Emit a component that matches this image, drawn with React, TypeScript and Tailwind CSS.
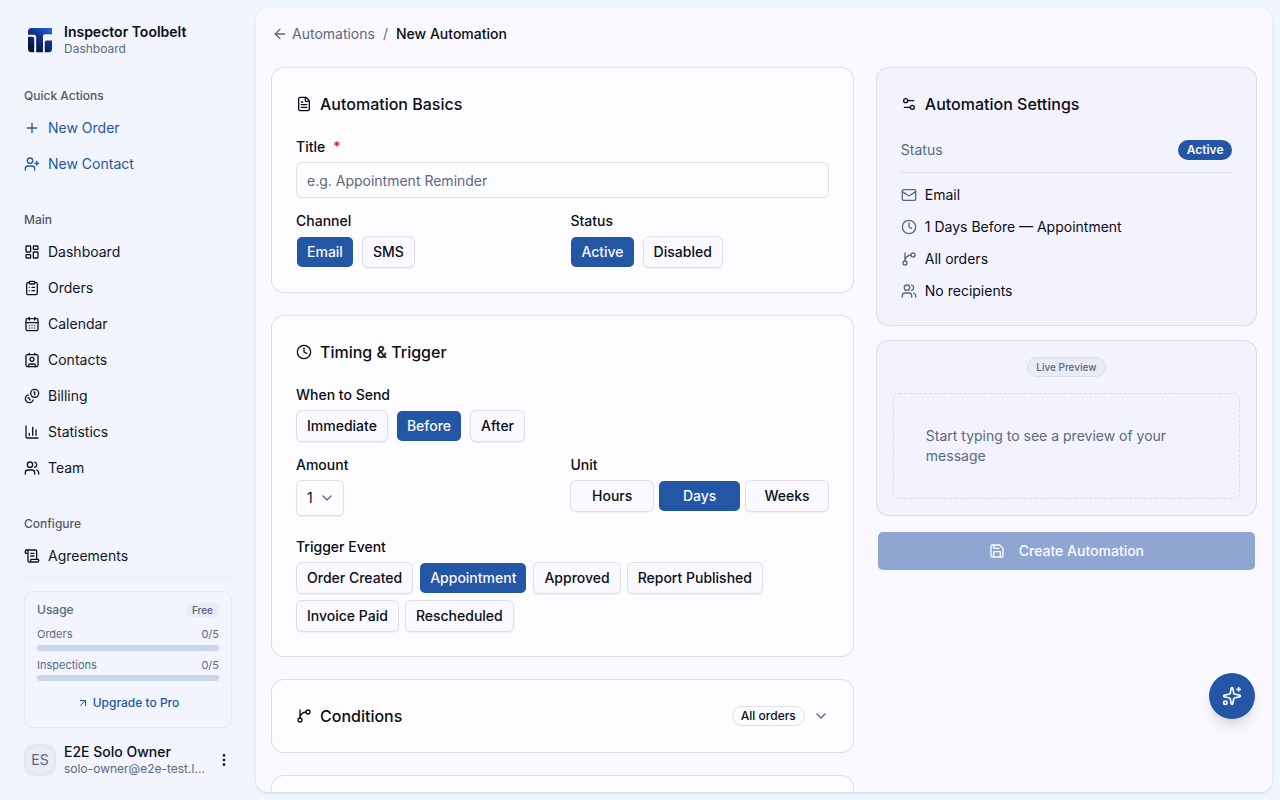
import { useState } from 'react';
import type { ReactNode } from 'react';
import { clsx } from 'clsx';
import {
  ArrowLeft,
  ArrowUpRight,
  CalendarDays,
  ChartColumn,
  ChevronDown,
  ClipboardList,
  Clock,
  Contact,
  EllipsisVertical,
  FileText,
  LayoutDashboard,
  Mail,
  Plus,
  Save,
  ScrollText,
  Settings2,
  Sparkles,
  UserPlus,
  Users,
  createLucideIcon,
} from 'lucide-react';
import type { LucideIcon } from 'lucide-react';

const Coins = createLucideIcon('coins-stack', [
  ['path', { d: 'M13.744 17.736a6 6 0 1 1-7.482-7.482', key: 'a' }],
  ['path', { d: 'M15 6h1v4', key: 'b' }],
  ['path', { d: 'm6.134 14.768.866-.5 2 3.464', key: 'c' }],
  ['circle', { cx: '16', cy: '8', r: '6', key: 'd' }],
]);

const Branch = createLucideIcon('branch', [
  ['path', { d: 'M15 6a9 9 0 0 0-9 9V3', key: 'a' }],
  ['circle', { cx: '18', cy: '6', r: '3', key: 'b' }],
  ['circle', { cx: '6', cy: '18', r: '3', key: 'c' }],
]);

interface NavItem {
  label: string;
  icon: LucideIcon;
}

const quickActions: NavItem[] = [
  { label: 'New Order', icon: Plus },
  { label: 'New Contact', icon: UserPlus },
];

const mainNav: NavItem[] = [
  { label: 'Dashboard', icon: LayoutDashboard },
  { label: 'Orders', icon: ClipboardList },
  { label: 'Calendar', icon: CalendarDays },
  { label: 'Contacts', icon: Contact },
  { label: 'Billing', icon: Coins },
  { label: 'Statistics', icon: ChartColumn },
  { label: 'Team', icon: Users },
];

const configureNav: NavItem[] = [{ label: 'Agreements', icon: ScrollText }];

function Logo() {
  return (
    <svg viewBox="0 0 32 32" className="size-8 shrink-0">
      <defs>
        <linearGradient id="logo-fill" x1="26" y1="4" x2="10" y2="28" gradientUnits="userSpaceOnUse">
          <stop offset="0" stopColor="#2563eb" />
          <stop offset="0.45" stopColor="#103286" />
          <stop offset="1" stopColor="#070f33" />
        </linearGradient>
      </defs>
      <g fill="url(#logo-fill)">
        <path d="M7.5 4H28v6.2h-7.2q-1.8 0-1.8 1.8v16.2h-6.8V13q0-2.2-2.2-2.2H4V7.5Q4 4 7.5 4Z" />
        <path d="M4 12.8h4.2q2 0 2 2v13.4H7.5Q4 28.2 4 24.7Z" />
        <path d="M22.6 16.6H28v8.1q0 3.5-3.5 3.5h-3.7v-9.8q0-1.8 1.8-1.8Z" />
      </g>
    </svg>
  );
}

function NavGroup({ title, items, accent = false }: { title: string; items: NavItem[]; accent?: boolean }) {
  return (
    <div className="px-2 pt-2 pb-4">
      <div className="flex h-8 items-center text-xs font-medium text-[#54565f]">{title}</div>
      <ul className="flex flex-col gap-1">
        {items.map(({ label, icon: Icon }) => (
          <li
            key={label}
            className={clsx('flex h-8 items-center gap-2 text-sm', accent ? 'text-[#2456a6]' : 'text-[#12141f]')}
          >
            <Icon className="size-4" />
            {label}
          </li>
        ))}
      </ul>
    </div>
  );
}

function UsageMeter({ label, value }: { label: string; value: string }) {
  return (
    <div>
      <div className="flex justify-between text-[11px] leading-4 text-[#5a6881]">
        <span>{label}</span>
        <span>{value}</span>
      </div>
      <div className="mt-[2.75px] h-1.5 rounded-full bg-[#c9d5eb]" />
    </div>
  );
}

function Sidebar() {
  return (
    <aside className="flex w-64 shrink-0 flex-col bg-[#f2f5fe] px-4">
      <div className="flex h-18 shrink-0 gap-2 px-2 pt-6">
        <Logo />
        <div className="flex flex-col gap-px">
          <span className="text-sm leading-4 font-semibold text-[#0b0d17]">Inspector Toolbelt</span>
          <span className="text-xs leading-4 text-[#5a6881]">Dashboard</span>
        </div>
      </div>

      <nav className="h-[504px] shrink-0 overflow-hidden">
        <NavGroup title="Quick Actions" items={quickActions} accent />
        <NavGroup title="Main" items={mainNav} />
        <NavGroup title="Configure" items={configureNav} />
      </nav>

      <div className="flex-1 rounded-t-lg bg-linear-to-b from-[#ebeffb] to-[#f2f5fe] to-[7px] px-2 pt-[15px]">
        <div className="h-[137px] rounded-lg border border-[#e4e8f5] bg-[#f2f5fe] px-3 pt-2.5">
          <div className="flex h-4 items-center justify-between">
            <span className="text-xs font-medium text-[#5a6881]">Usage</span>
            <span className="rounded-full bg-[#e9ecf7] px-1.5 text-[10px] leading-[14px] font-medium text-[#54617a]">
              Free
            </span>
          </div>
          <div className="mt-2 flex flex-col gap-[5.75px]">
            <UsageMeter label="Orders" value="0/5" />
            <UsageMeter label="Inspections" value="0/5" />
          </div>
          <div className="mt-3.5 flex h-4 items-center justify-center gap-1 text-xs font-medium text-[#2456a6]">
            <ArrowUpRight className="size-3" />
            Upgrade to Pro
          </div>
        </div>

        <div className="mt-4 flex items-start gap-2">
          <div className="size-8 shrink-0 rounded-lg bg-[#e9ecf7]">
            <div className="flex size-8 items-center justify-center rounded-full border border-[#dcdfeb] text-sm text-[#5a6881]">
              ES
            </div>
          </div>
          <div className="flex w-[144px] flex-col gap-px">
            <span className="text-sm leading-4 font-medium text-[#0b0d17]">E2E Solo Owner</span>
            <span className="truncate text-xs leading-4 text-[#5a6881]">solo-owner@e2e-test.local</span>
          </div>
          <EllipsisVertical className="mt-2 size-4" />
        </div>
      </div>
    </aside>
  );
}

function Card({ children, className }: { children?: ReactNode; className?: string }) {
  return (
    <section
      className={clsx('rounded-xl shadow-[0_1px_2px_rgba(20,20,50,0.06)] ring-1 ring-[#dddee9]', className)}
    >
      {children}
    </section>
  );
}

function CardTitle({ icon: Icon, children }: { icon: LucideIcon; children: ReactNode }) {
  return (
    <h2 className="flex h-6 items-center gap-2 text-base font-medium">
      <Icon className="size-4" />
      {children}
    </h2>
  );
}

function Label({ children }: { children: ReactNode }) {
  return <div className="mb-2 flex gap-2 text-sm leading-none font-medium">{children}</div>;
}

interface ToggleProps {
  options: string[];
  value: string;
  onChange: (value: string) => void;
  className: string;
}

function ToggleGroup({ options, value, onChange, className }: ToggleProps) {
  return (
    <div className={className}>
      {options.map((option) => (
        <button
          key={option}
          type="button"
          onClick={() => onChange(option)}
          className={clsx(
            'h-8 rounded-md border bg-clip-padding px-2.5 text-sm font-medium whitespace-nowrap',
            option === value
              ? 'border-transparent bg-[#2456a6] text-[#f8f9ff]'
              : 'border-[#dddee9] bg-[#faf9ff] shadow-[0_1px_2px_rgba(20,20,50,0.06)]',
          )}
        >
          {option}
        </button>
      ))}
    </div>
  );
}

function BasicsCard() {
  const [channel, setChannel] = useState('Email');
  const [status, setStatus] = useState('Active');

  return (
    <Card className="bg-[#fdfdff] p-6">
      <CardTitle icon={FileText}>Automation Basics</CardTitle>
      <div className="mt-6">
        <Label>
          Title <span className="text-[#c81e2b]">*</span>
        </Label>
        <input
          placeholder="e.g. Appointment Reminder"
          className="block h-9 w-full rounded-md border border-[#dddee9] px-2.5 text-sm shadow-[0_1px_2px_rgba(20,20,50,0.04)] outline-none placeholder:text-[#5a6881]"
        />
      </div>
      <div className="mt-4 grid grid-cols-2 gap-4">
        <div>
          <Label>Channel</Label>
          <ToggleGroup options={['Email', 'SMS']} value={channel} onChange={setChannel} className="flex gap-2" />
        </div>
        <div>
          <Label>Status</Label>
          <ToggleGroup options={['Active', 'Disabled']} value={status} onChange={setStatus} className="flex gap-2" />
        </div>
      </div>
    </Card>
  );
}

function TimingCard() {
  const [when, setWhen] = useState('Before');
  const [unit, setUnit] = useState('Days');
  const [trigger, setTrigger] = useState('Appointment');

  return (
    <Card className="bg-[#fdfdff] p-6">
      <CardTitle icon={Clock}>Timing &amp; Trigger</CardTitle>
      <div className="mt-6">
        <Label>When to Send</Label>
        <ToggleGroup
          options={['Immediate', 'Before', 'After']}
          value={when}
          onChange={setWhen}
          className="flex gap-2"
        />
      </div>
      <div className="mt-4 grid grid-cols-2 gap-4">
        <div>
          <Label>Amount</Label>
          <button
            type="button"
            className="flex h-9 w-12 items-center justify-between rounded-md border border-[#dddee9] pr-2 pl-2.5 text-sm shadow-[0_1px_2px_rgba(20,20,50,0.06)]"
          >
            1
            <ChevronDown className="size-4 text-[#5a6881]" />
          </button>
        </div>
        <div>
          <Label>Unit</Label>
          <ToggleGroup
            options={['Hours', 'Days', 'Weeks']}
            value={unit}
            onChange={setUnit}
            className="grid grid-cols-3 gap-1"
          />
        </div>
      </div>
      <div className="mt-6">
        <Label>Trigger Event</Label>
        <ToggleGroup
          options={['Order Created', 'Appointment', 'Approved', 'Report Published', 'Invoice Paid', 'Rescheduled']}
          value={trigger}
          onChange={setTrigger}
          className="flex flex-wrap gap-1.5"
        />
      </div>
    </Card>
  );
}

function SummaryRow({ icon: Icon, children }: { icon: LucideIcon; children: ReactNode }) {
  return (
    <li className="flex h-5 items-center gap-2 text-sm">
      <Icon className="size-4 text-[#5a6881]" />
      {children}
    </li>
  );
}

function SettingsPanel() {
  return (
    <div className="w-[379.2px] shrink-0">
      <Card className="bg-[#f2f3fc] p-6">
        <CardTitle icon={Settings2}>Automation Settings</CardTitle>
        <div className="mt-6 flex h-[33px] items-start justify-between border-b border-[#dadde9] text-sm">
          <span className="text-[#5a6881]">Status</span>
          <span className="flex h-5 items-center rounded-full bg-[#2456a6] px-[8.5px] text-xs font-semibold text-[#f8f9ff]">
            Active
          </span>
        </div>
        <ul className="mt-3 flex flex-col gap-3">
          <SummaryRow icon={Mail}>Email</SummaryRow>
          <SummaryRow icon={Clock}>1 Days Before — Appointment</SummaryRow>
          <SummaryRow icon={Branch}>All orders</SummaryRow>
          <SummaryRow icon={Users}>No recipients</SummaryRow>
        </ul>
      </Card>

      <Card className="mt-4 flex flex-col items-center bg-[#f2f3fc] p-4">
        <span className="flex h-5 items-center rounded-full border border-[#dadde9] bg-[#e9ecf6] px-2 text-[10px] font-medium text-[#5a6881]">
          Live Preview
        </span>
        <p className="mt-4 w-full rounded-md border border-dashed border-[#dadde9] p-8 text-sm text-[#5a6881]">
          Start typing to see a preview of your message
        </p>
      </Card>

      <button
        type="button"
        className="mt-4 flex h-10 w-full items-center justify-center gap-3.5 rounded-md border border-transparent bg-[#8fa6d2] bg-clip-padding text-sm font-medium text-[#fafbff]"
      >
        <Save className="size-4" />
        Create Automation
      </button>
    </div>
  );
}

export default function App() {
  return (
    <div className="relative flex h-screen w-full overflow-hidden bg-[#f1f5fe] font-['Inter',sans-serif] text-[#0b0d17]">
      <Sidebar />

      <main className="my-2 mr-2 flex-1 overflow-hidden rounded-xl bg-[#faf9ff] px-4 shadow-[0_1px_3px_rgba(20,20,60,0.14)]">
        <div className="flex h-[60px] items-start pt-4 text-sm">
          <a className="flex h-5 items-center gap-1 text-[#5a6881]">
            <ArrowLeft className="size-4" />
            Automations
          </a>
          <span className="ml-2 text-[#5a6881]">/</span>
          <span className="ml-2 font-medium">New Automation</span>
        </div>

        <div className="flex items-start gap-6">
          <div className="flex flex-1 flex-col gap-6">
            <BasicsCard />
            <TimingCard />
            <Card className="flex items-center justify-between bg-[#fdfdff] p-6">
              <CardTitle icon={Branch}>Conditions</CardTitle>
              <div className="flex items-center gap-2">
                <span className="flex h-5 items-center rounded-full border border-[#dddee9] px-2 text-xs font-medium">
                  All orders
                </span>
                <ChevronDown className="size-4 text-[#5a6881]" />
              </div>
            </Card>
            <Card className="h-18 bg-[#fdfdff]" />
          </div>
          <SettingsPanel />
        </div>
      </main>

      {/* Floating assistant button */}
      <button
        type="button"
        className="absolute right-[25px] bottom-[81px] flex size-[46px] items-center justify-center rounded-full bg-[#2456a6] text-white shadow-[0_10px_15px_-3px_rgba(0,0,0,0.12),0_4px_6px_-4px_rgba(0,0,0,0.12)]"
      >
        <Sparkles className="size-5" />
      </button>
    </div>
  );
}
